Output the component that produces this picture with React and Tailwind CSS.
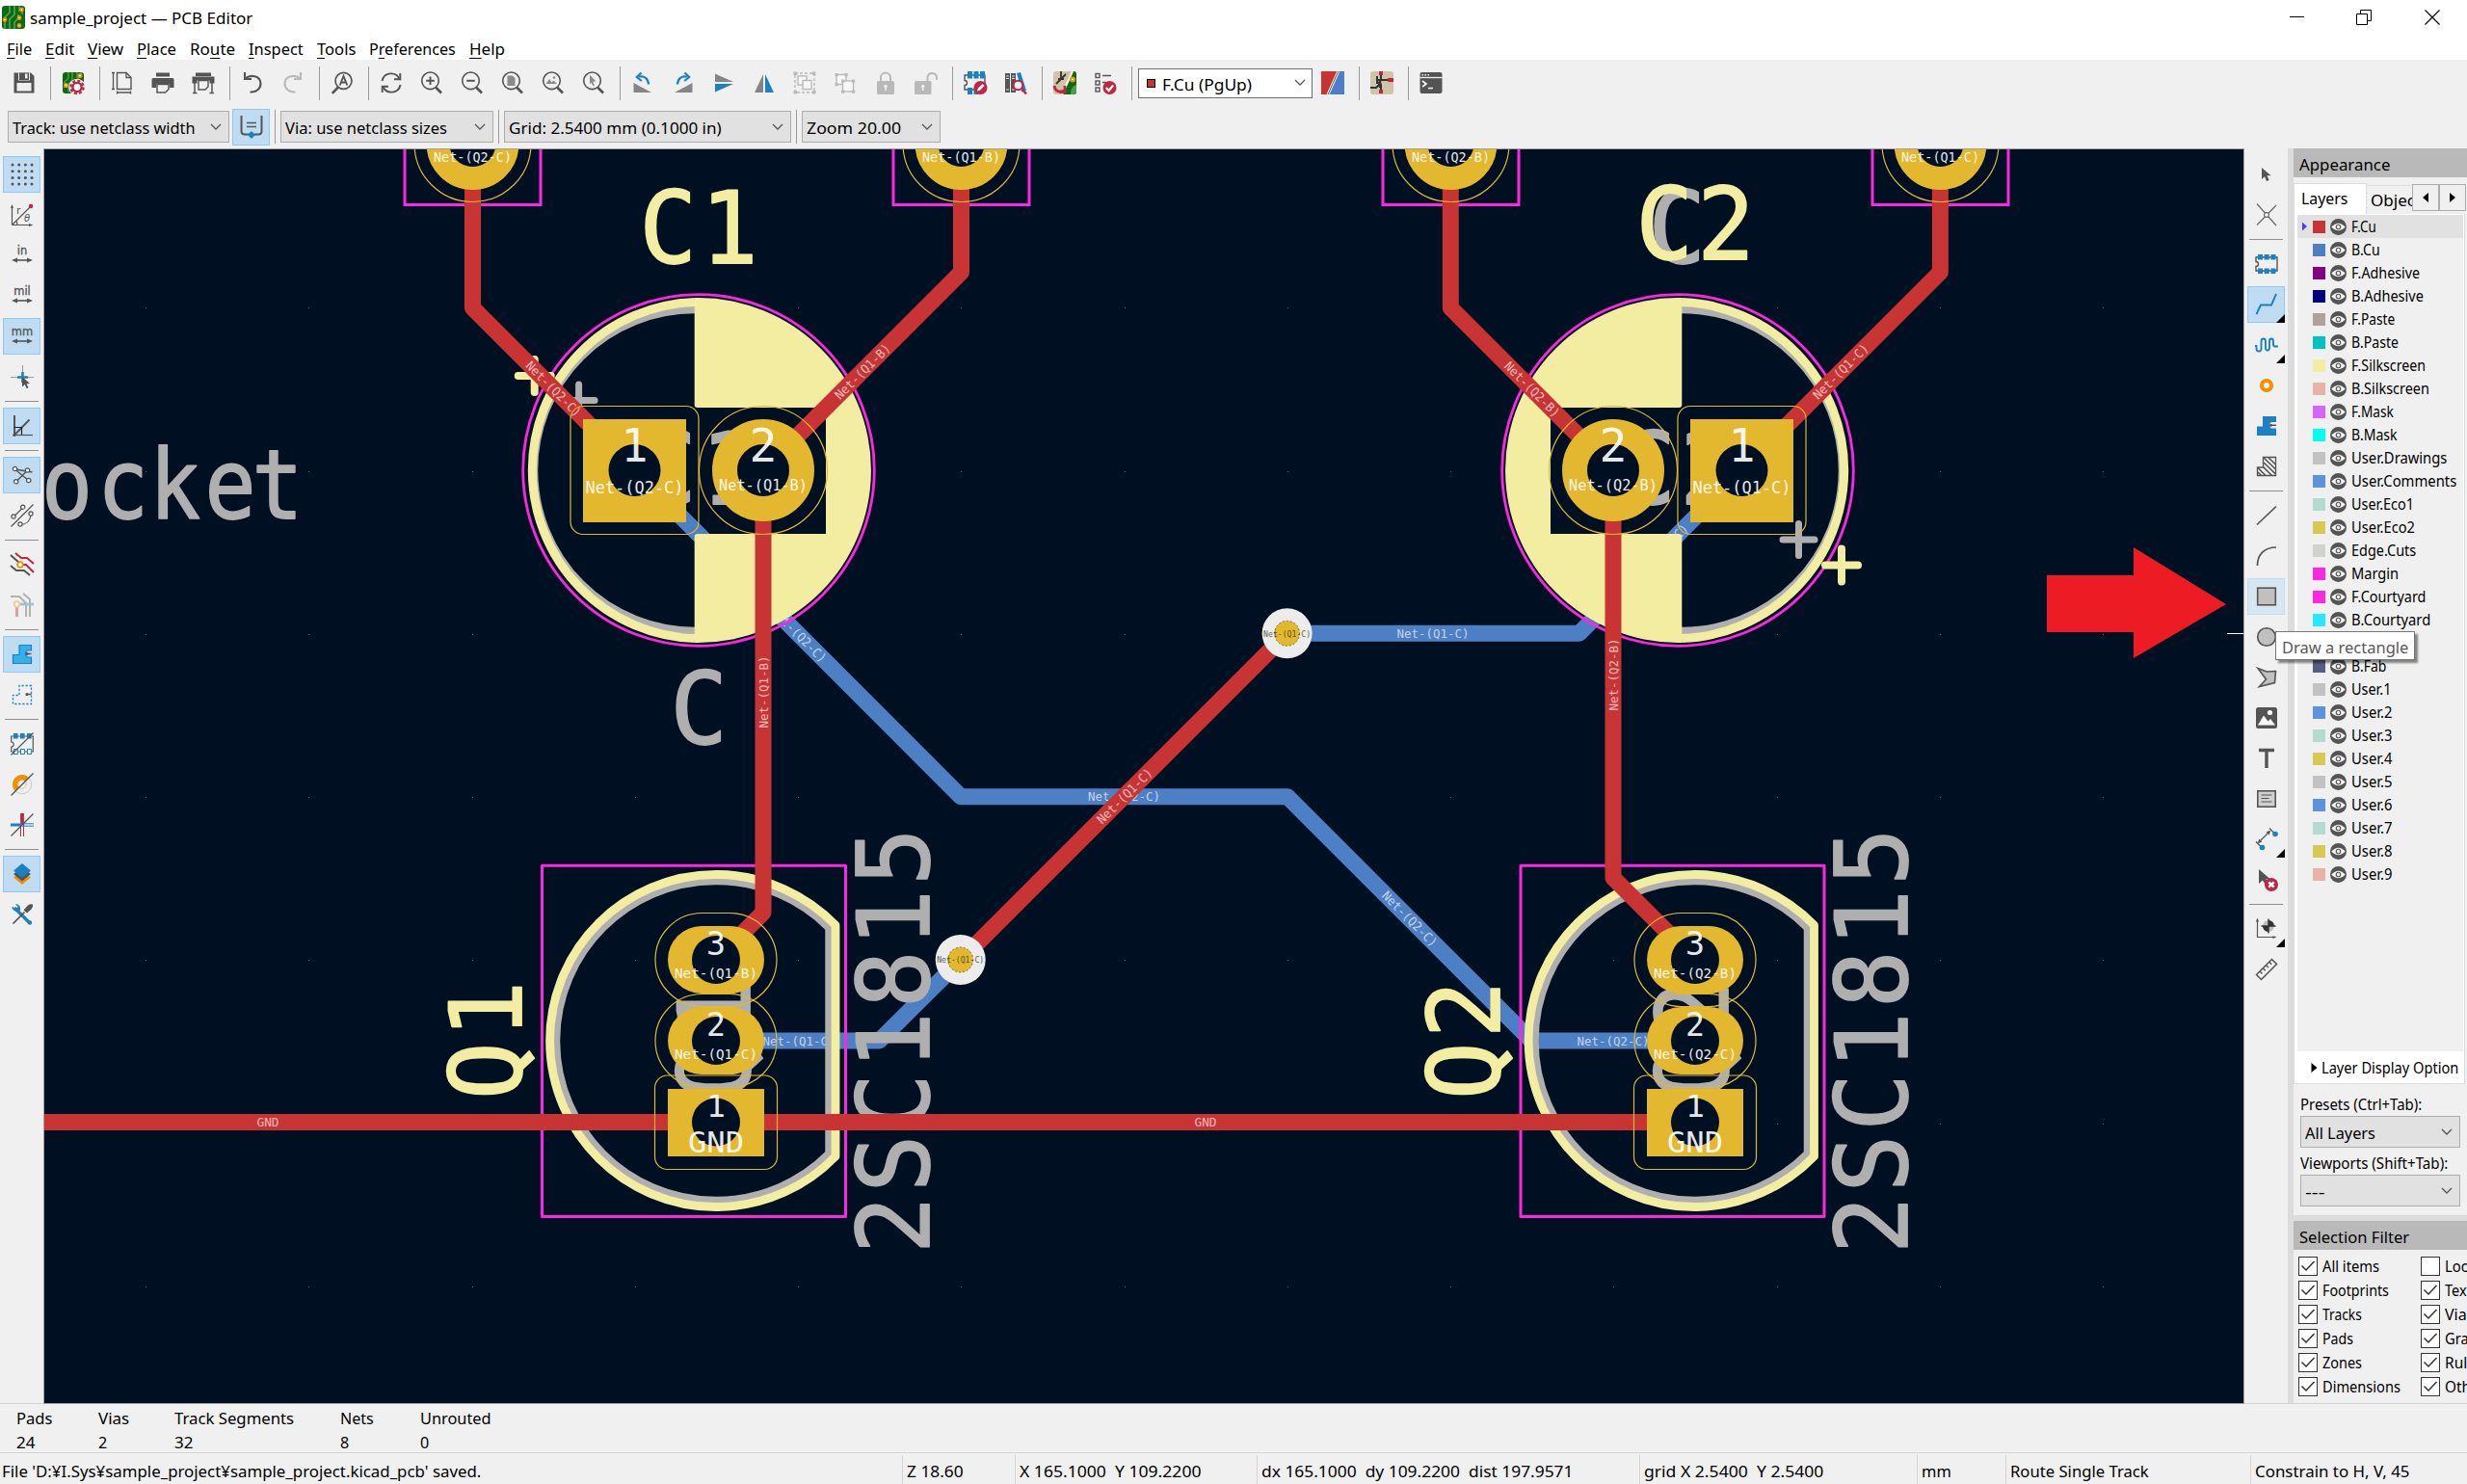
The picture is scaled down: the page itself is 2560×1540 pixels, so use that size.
import React, { useLayoutEffect, useRef, useState } from "react";

const D = "#545454";
const B = "#1a81c4";
const R = "#bf2641";
const O = "#f29100";
const G = "#b9b9b9";

/* Text squeezed or stretched horizontally to a given width. */
function Fit({ w, children, className = "" }) {
  const ref = useRef(null);
  const [k, setK] = useState(1);
  useLayoutEffect(() => {
    setK(w / ref.current.offsetWidth);
  }, [w]);
  return (
    <span className={"inline-block shrink-0 whitespace-nowrap pt-[2px] " + className} style={{ width: w }}>
      <span ref={ref} className="inline-block origin-left whitespace-nowrap" style={{ transform: `scaleX(${k})` }}>
        {children}
      </span>
    </span>
  );
}

function Svg({ children, s = 24 }) {
  return (
    <svg width={s} height={s} viewBox="0 0 24 24" fill="none" className="block shrink-0 overflow-visible">
      {children}
    </svg>
  );
}

const lens = (
  <>
    <circle cx="10.5" cy="9.8" r="8.8" stroke={D} strokeWidth="1.6" />
    <path d="M16 16.5 L22 22.5" stroke={D} strokeWidth="2.6" />
  </>
);

const boardBase = (
  <>
    <rect x="1" y="1" width="22" height="22" rx="3" fill="#0b6b12" />
    <path d="M7 1v6l-4 4v6M11 1v8l-4 4v9M16 1v5l3 4v7M20 1v5" stroke="#49a04a" strokeWidth="1.4" />
  </>
);

const footprint = (
  <>
    <path d="M1 5h22v14H1v-4.5a2.5 2.5 0 0 0 0-5z" stroke={D} strokeWidth="1.4" />
    {[3, 9.7, 16.5].map((x) => (
      <g key={x}>
        <rect x={x} y="2" width="5" height="5.5" fill={B} />
        <rect x={x} y="16.5" width="5" height="5.5" fill={B} />
      </g>
    ))}
  </>
);

const I = {
  app: (
    <>
      <rect x="0" y="0" width="24" height="24" rx="3" fill="#0b6b12" />
      <path d="M8 0v7l-5 5v12M13 0v9l-5 5v10M18 0v6M13 24v-7l4-4V9M21 4v5" stroke="#52a552" strokeWidth="1.6" />
      <g fill="#fff" stroke={O} strokeWidth="1.6">
        <circle cx="3" cy="14.5" r="1.6" />
        <circle cx="20.5" cy="4" r="1.6" />
        <circle cx="18" cy="12.5" r="1.6" />
        <circle cx="18" cy="20.5" r="1.6" />
      </g>
    </>
  ),
  save: (
    <>
      <path d="M1.5 1.5h17.5l3.5 3.5v17.5h-21z" fill={D} />
      <rect x="6" y="1.5" width="12" height="8" fill="#f0f0f0" />
      <rect x="7" y="1.5" width="10" height="7.5" fill={D} />
      <rect x="13" y="2.5" width="2.5" height="5" fill="#f0f0f0" />
      <rect x="4.5" y="12" width="15" height="8.5" fill="#f0f0f0" />
    </>
  ),
  setup: (
    <>
      {boardBase}
      <circle cx="4.5" cy="14.5" r="1.8" fill="#fff" stroke={O} strokeWidth="1.5" />
      <circle cx="19" cy="4.5" r="1.8" fill="#fff" stroke={O} strokeWidth="1.5" />
      <circle cx="16" cy="16.5" r="6.2" stroke="#f0f0f0" strokeWidth="5" />
      <circle cx="16" cy="16.5" r="6.6" stroke={R} strokeWidth="2.4" strokeDasharray="3 2.2" />
      <circle cx="16" cy="16.5" r="4.6" stroke={R} strokeWidth="2.4" fill="#fff" />
    </>
  ),
  page: (
    <>
      <path d="M6.5 1.5h9.5l5 5v12h-14.5z" stroke={D} strokeWidth="1.4" />
      <path d="M16 1.5v5h5M2.5 1v18M1 1.5h3M1 18.5h3M6 22h15M6.5 20.5v3M20.5 20.5v3" stroke={D} strokeWidth="1.3" />
    </>
  ),
  print: (
    <>
      <rect x="5" y="1.5" width="14" height="4" fill={D} />
      <path d="M2 7h20a1.5 1.5 0 0 1 1.5 1.5V17H19v-4H5v4H.5V8.5A1.5 1.5 0 0 1 2 7z" fill={D} />
      <path d="M6 13.5h12v5l-3.5 3.5H6z" stroke={D} strokeWidth="1.5" fill="#f0f0f0" />
    </>
  ),
  plot: (
    <>
      <rect x="4" y="1.5" width="16" height="3.5" fill={D} />
      <path d="M.5 5.5h23v7h-5V9.5h-13v3h-5z" fill={D} />
      <path d="M3 12v10.5M21 12v10.5M1 22.5h4.5M18.5 22.5H23" stroke={D} strokeWidth="1.5" />
      <path d="M7 9.5h10v6.5l-3 3H7z" stroke={D} strokeWidth="1.4" fill="#f0f0f0" />
    </>
  ),
  undo: <path d="M4 1v7h7M4.5 7.5C10 3 20 4.5 20.5 12.5 20.5 18 16 22 9.5 21.5" stroke={D} strokeWidth="2.1" />,
  redo: <path d="M20 1v7h-7M19.5 7.5C14 3 4 4.5 3.5 12.5 3.5 18 8 22 14.5 21.5" stroke={G} strokeWidth="2.1" />,
  find: (
    <>
      <circle cx="13.5" cy="9.8" r="8.5" stroke={D} strokeWidth="1.7" />
      <path d="M8 16.5L1.8 22.8" stroke={D} strokeWidth="2.6" />
      <path d="M9.7 14.5l3.8-9.5 3.8 9.5M11 11.5h5" stroke={D} strokeWidth="1.9" />
    </>
  ),
  refresh: (
    <>
      <path d="M2.5 10A9.5 9.5 0 0 1 20.5 8M21.5 14A9.5 9.5 0 0 1 3.5 16" stroke={D} strokeWidth="1.9" />
      <path d="M21.3 2v6.3H15M2.7 22v-6.3H9" stroke={D} strokeWidth="1.9" />
    </>
  ),
  zin: (
    <>
      {lens}
      <path d="M10.5 5.5v8.6M6.2 9.8h8.6" stroke={D} strokeWidth="2" />
    </>
  ),
  zout: (
    <>
      {lens}
      <path d="M6.2 9.8h8.6" stroke={D} strokeWidth="2" />
    </>
  ),
  zfit: (
    <>
      {lens}
      <path d="M6.5 4.5h5.5l2.5 2.5v8h-8z" fill="#8a8a8a" />
    </>
  ),
  zobj: (
    <>
      {lens}
      <path d="M4.5 13l3.5-5 2.5 3.5 2-2 3.5 3.5z" fill="#8a8a8a" />
      <circle cx="13" cy="6.5" r="1.3" fill="#8a8a8a" />
    </>
  ),
  zsel: (
    <>
      {lens}
      <path d="M8 3.8l6.5 6.7-3.3.2 1.7 3.9-1.6.7-1.7-3.9L8 13.5z" fill="#8a8a8a" />
    </>
  ),
  ccw: (
    <>
      <path d="M2.5 12l18.5 10H2.5z" fill="#858585" />
      <path d="M8 5.5c6-1 9.5 2 10 8" stroke={B} strokeWidth="2.2" />
      <path d="M10.5 1.5L5.8 6l5 4" stroke={B} strokeWidth="2.2" />
    </>
  ),
  cw: (
    <>
      <path d="M21.5 12L3 22h18.5z" fill="#858585" />
      <path d="M16 5.5c-6-1-9.5 2-10 8" stroke={B} strokeWidth="2.2" />
      <path d="M13.5 1.5L18.2 6l-5 4" stroke={B} strokeWidth="2.2" />
    </>
  ),
  flip: (
    <>
      <path d="M3 2.5v8.5h19z" fill="#858585" />
      <path d="M3 21.5V13h19z" fill={B} />
    </>
  ),
  mirror: (
    <>
      <path d="M2 22h9V3z" fill="#858585" />
      <path d="M22 22h-9V3z" fill={B} />
    </>
  ),
  group: (
    <>
      <rect x="2" y="2" width="20" height="20" stroke={G} strokeWidth="1.4" strokeDasharray="3 2" />
      <g fill={G}>
        <rect x="0.5" y="0.5" width="3.5" height="3.5" />
        <rect x="20" y="0.5" width="3.5" height="3.5" />
        <rect x="0.5" y="20" width="3.5" height="3.5" />
        <rect x="20" y="20" width="3.5" height="3.5" />
      </g>
      <g fill="#f8f8f8" stroke={G} strokeWidth="1.4">
        <rect x="5" y="5" width="9" height="9" />
        <rect x="10" y="9.5" width="9" height="9" />
      </g>
    </>
  ),
  ungroup: (
    <>
      <g fill="#f8f8f8" stroke={G} strokeWidth="1.4">
        <rect x="3" y="3.5" width="10" height="10" />
        <rect x="9.5" y="10" width="11" height="11" />
      </g>
      <g fill={G}>
        {[[1.5, 2], [11.5, 2], [1.5, 12], [8, 8.5], [19, 8.5], [8, 19.5], [19, 19.5]].map(([x, y], i) => (
          <rect key={i} x={x} y={y} width="3.2" height="3.2" />
        ))}
      </g>
    </>
  ),
  lock: (
    <>
      <path d="M7 11V6.5a5 5 0 0 1 10 0V11" stroke={G} strokeWidth="2" />
      <rect x="3" y="10" width="18" height="14" rx="1.5" fill={G} />
      <circle cx="12" cy="15.5" r="1.7" fill="#f0f0f0" />
      <rect x="11.2" y="16" width="1.6" height="4" fill="#f0f0f0" />
    </>
  ),
  unlock: (
    <>
      <path d="M13.5 11V5.5a5 5 0 0 1 9.5 0V9" stroke={G} strokeWidth="2" />
      <rect x="0" y="10" width="17.5" height="14" rx="1.5" fill={G} />
      <circle cx="8.7" cy="15.5" r="1.7" fill="#f0f0f0" />
      <rect x="7.9" y="16" width="1.6" height="4" fill="#f0f0f0" />
    </>
  ),
  fped: (
    <>
      <path d="M1 4h21v15H1v-4.5a2.5 2.5 0 0 0 0-5z" stroke={D} strokeWidth="1.4" />
      {[4, 10.5, 17].map((x) => (
        <rect key={x} x={x} y="0" width="5" height="7.5" fill={B} />
      ))}
      <rect x="4" y="17" width="5" height="7" fill={B} />
      <rect x="10.5" y="17" width="5" height="7" fill={B} />
      <circle cx="17.5" cy="17" r="7" fill={R} />
      <path d="M14 20.5l.8-2.8L19.5 13l2 2-4.7 4.7z" fill="#fff" />
    </>
  ),
  lib: (
    <>
      <rect x="1" y="2" width="5" height="20" fill={D} />
      <rect x="7" y="2" width="5" height="20" fill={D} />
      <path d="M13 2l4-1 6 19-4.5 1.5z" fill={B} />
      <path d="M2 5h3M2 7.5h3M8 5h3M8 7.5h3M2 19h3M8 19h3" stroke="#ddd" />
      <circle cx="14.5" cy="14.5" r="4.8" stroke={R} strokeWidth="2" fill="#f0f0f0" />
      <path d="M18 18l5 5.5" stroke={R} strokeWidth="2.6" />
    </>
  ),
  upd: (
    <>
      <rect x="0" y="0" width="24" height="24" rx="3" fill="#cfc3a9" />
      <path d="M20 0h1a3 3 0 0 1 3 3v18a3 3 0 0 1-3 3h-11z" fill="#0b6b12" />
      <path d="M24 14c-4 1-6 4-6 10h3a3 3 0 0 0 3-3z" fill="#49a04a" />
      <path d="M8 0v8M5 8h6M8 8l5-5M8 8L3 13" stroke="#333" strokeWidth="1.8" />
      <path d="M20 0L9 24" stroke="#fff" strokeWidth="2" />
      <circle cx="20" cy="8.5" r="2" fill="#fff" stroke={O} strokeWidth="2" />
      <path d="M1 15c1 6 5 7 10 5M12 15v6.5H6.5" stroke={R} strokeWidth="2.8" />
    </>
  ),
  drc: (
    <>
      <g stroke={D} strokeWidth="1.4">
        <rect x="2" y="2.5" width="4" height="4" />
        <rect x="2" y="10" width="4" height="4" />
        <rect x="2" y="17" width="4" height="4" />
        <path d="M9 4.5h9M9 11.5h4" />
      </g>
      <circle cx="16.5" cy="17" r="7" fill={R} />
      <path d="M12.8 17l2.8 3 4.6-5.5" stroke="#fff" strokeWidth="2.2" />
    </>
  ),
  pair: (
    <>
      <path d="M0 0h17L6 24H0z" fill="#c83434" />
      <path d="M18 0h6v24H7z" fill="#4d7fc4" />
      <path d="M17.8 0L7 24" stroke="#fff" strokeWidth="2.8" />
      <path d="M17.8 0L7 24" stroke="#444" strokeWidth=".9" />
    </>
  ),
  sch: (
    <>
      <rect x="0" y="0" width="24" height="24" rx="3" fill="#cfc3a9" />
      <path d="M11 2v7M7 5v8M7 9h13M7 11L11 14v8M0 17h6l4-4" stroke="#333" strokeWidth="2" />
      <path d="M10 8v9" stroke="#333" strokeWidth="2.6" />
      <rect x="9" y="0" width="4" height="4" fill={R} />
      <rect x="18" y="7" width="6" height="4" fill={R} />
      <rect x="9" y="19" width="4" height="4" fill={R} />
    </>
  ),
  term: (
    <>
      <rect x="0.5" y="1" width="23" height="22" rx="2" fill={D} />
      <path d="M.5 6.5h23" stroke="#f0f0f0" strokeWidth="1.3" />
      <path d="M2.5 3.8h1.5M5.5 3.8h1.5M8.5 3.8h1.5" stroke="#fff" strokeWidth="1.4" />
      <path d="M3 10l4 3-4 3M9 17.5h5" stroke="#fff" strokeWidth="1.6" />
    </>
  ),
  autow: (
    <>
      <path d="M1.5 0v16q0 3.5 3.5 3.5h14q3.500 0 3.500-3.500V0" stroke={D} strokeWidth="2" />
      <path d="M7 7.5h10M7 11.500h10" stroke={D} strokeWidth="1.400" />
      <path d="M12 16l4 4-4 4-4-4z" fill={B} />
    </>
  ),
  grid: (
    <g fill={D}>
      {[2, 8.7, 15.4, 22].map((x) => [2, 8.7, 15.4, 22].map((y) => <circle key={x + "-" + y} cx={x} cy={y} r="1.5" />))}
    </g>
  ),
  polar: (
    <>
      <path d="M1.5 22.5V2M1.5 22.5H22M1.5 22.5L21 3M7 22a7 7 0 0 0-1.5-4" stroke={D} strokeWidth="1.2" />
      <path d="M0 5l1.5-4L3 5zM19 21l4.500 1.5L19 24z" fill={D} />
      <circle cx="21" cy="3" r="2.2" fill={R} />
      <text x="6" y="11" fontSize="11" fill={D} fontFamily="DejaVu Sans">r</text>
      <text x="14" y="19" fontSize="10" fill={D} fontStyle="italic" fontFamily="DejaVu Sans">θ</text>
    </>
  ),
  cursor: (
    <>
      <path d="M12.5 0v22M0 12.5h24" stroke="#999" strokeWidth="1" />
      <path d="M12.5 7v11M7 12.5h11" stroke={B} strokeWidth="2.6" />
      <path d="M12 12l8 7-3.5.3 2 4-1.8.9-2-4.2-2.7 2.5z" fill={D} />
    </>
  ),
  angle: (
    <>
      <path d="M4 1v22" stroke={D} strokeWidth="2" />
      <path d="M2 21.5h21" stroke={D} strokeWidth="1.2" />
      <path d="M4 21.5L19.5 5.5" stroke={D} strokeWidth="1.9" />
      <path d="M4 13.5h7.5v7.5" stroke="#222" strokeWidth="1.2" />
    </>
  ),
  rats: (
    <>
      <path d="M4.5 6l18 3M4.5 6l14 11.5M5.7 19L17 7.5" stroke={D} strokeWidth="1.4" />
      <g fill="#fff" stroke={D} strokeWidth="1.2">
        <circle cx="4.5" cy="5.5" r="2.2" />
        <circle cx="17.5" cy="7" r="2.2" />
        <circle cx="5.7" cy="18.8" r="2.2" />
        <circle cx="18.7" cy="17.5" r="2.2" />
      </g>
    </>
  ),
  curved: (
    <>
      <path d="M3 13.5L12.5 4M10 21.5c7 0 10-4 11-9.5M.5 23.5L23.5.5" stroke={D} strokeWidth="1.2" />
      <g fill="#fff" stroke={D} strokeWidth="1.2">
        <circle cx="3" cy="13" r="2.1" />
        <circle cx="12.7" cy="3.2" r="2.1" />
        <circle cx="10" cy="21" r="2.1" />
        <circle cx="21" cy="10" r="2.1" />
      </g>
    </>
  ),
  netcol: (
    <>
      <path d="M0 2l10 9M0 13l6 5h8l6 5" stroke={D} strokeWidth="2" />
      <path d="M5 0l6 5h6l7 6M12 12h4l8 8" stroke={R} strokeWidth="2" />
      <circle cx="10" cy="12" r="2.8" fill="#fff" stroke={O} strokeWidth="1.8" />
    </>
  ),
  dimnet: (
    <g opacity=".4">
      <path d="M0 3h9l7 7v14M13 0l7 6v18" stroke={D} strokeWidth="2" />
      <path d="M9 11h15" stroke={B} strokeWidth="2.8" />
      <path d="M6.5 13v11" stroke={R} strokeWidth="3" />
      <circle cx="6.5" cy="11" r="2.8" fill="#fff" stroke={O} strokeWidth="1.8" />
    </g>
  ),
  zfill: (
    <>
      <path d="M2.5 21.5v-9h6.5v-10h12.5v5.5h-4a4 4 0 0 0 0 7h4v6.5z" fill="#34b0ea" stroke={B} strokeWidth="1.2" />
      <path d="M16 11.5h5.5" stroke={D} strokeWidth="1.5" />
      <circle cx="17" cy="11.5" r="1.6" fill={D} />
    </>
  ),
  zoutl: (
    <>
      <path d="M2.5 21.5v-9h6.5v-10h12.5v19z" stroke={B} strokeWidth="1.3" strokeDasharray="2.2 1.8" />
      <path d="M16 11.5h5.5" stroke={D} strokeWidth="1.5" />
      <circle cx="17" cy="11.5" r="1.6" fill={D} />
    </>
  ),
  fpout: (
    <>
      <path d="M.7 4h22.6v16H.7v-5a2.5 2.5 0 0 0 0-5z" stroke={D} strokeWidth="1.2" />
      {[3, 10, 17].map((x) => (
        <g key={x}>
          <rect x={x} y="1" width="4.6" height="5.5" fill={B} />
          <rect x={x + 0.5} y="17.5" width="3.8" height="5" fill="#fff" stroke={B} />
        </g>
      ))}
      <path d="M.5 23.5L23.5.5" stroke={D} strokeWidth="1.2" />
    </>
  ),
  padout: (
    <>
      <circle cx="12" cy="12" r="9.7" fill="#f0f0f0" stroke="#c8c8c8" strokeWidth="1" />
      <path d="M19 5A9.900 9.900 0 1 0 5 19l4-4a4.200 4.200 0 0 1 6-6z" fill={O} />
      <circle cx="12" cy="12" r="4.2" stroke="#c8c8c8" />
      <path d="M.5 23.5L23.5.5" stroke={D} strokeWidth="1.2" />
    </>
  ),
  trkout: (
    <>
      <path d="M12 0v12" stroke={R} strokeWidth="3.8" />
      <path d="M0 12h12" stroke={B} strokeWidth="3" />
      <path d="M10.5 13v11M13.5 11v13" stroke={R} strokeWidth="1" />
      <path d="M12 10.8h12M12 13.2h12" stroke={B} strokeWidth="1" />
      <path d="M.5 23.5L23.5.5" stroke={D} strokeWidth="1.2" />
    </>
  ),
  layers: (
    <>
      <path d="M3 15.5l9 7.5 9-7.5-9-7z" fill={O} />
      <path d="M3 12l9 7.5 9-7.5-9-7z" fill={D} />
      <path d="M3 8.5L12 16l9-7.5L12 1z" fill={B} />
    </>
  ),
  tools: (
    <>
      <path d="M5 6l14 14" stroke={B} strokeWidth="3.4" strokeLinecap="round" />
      <path d="M2 3.5l3 3 2.5-2.5-2.5-3a5 5 0 0 1 5 6.5A5 5 0 0 1 1.5 5z" fill={B} />
      <circle cx="20" cy="20.5" r="2.2" fill={B} />
      <path d="M14.5 9.5L2.5 21.5" stroke={D} strokeWidth="1.7" />
      <path d="M13.5 7.5L18 2.5q3-2 5-1 .5 3-1.5 5L17 10.5z" fill={D} />
    </>
  ),
  arrow: <path d="M7 5v12l3-2.7 2 4.7 2.6-1.1-2-4.6h4z" fill={D} />,
  ratsr: (
    <>
      <path d="M2 0.5L22 23M22 2L2 22.5" stroke="#6a6a6a" strokeWidth="1.2" />
      <circle cx="12" cy="12" r="2.4" fill="#fff" stroke="#6a6a6a" strokeWidth="1.2" />
    </>
  ),
  fp: footprint,
  route: <path d="M1.5 22L6 12.5h11L22 1" stroke={B} strokeWidth="1.9" />,
  meander: <path d="M0 13h1.500v3q0 2.500 2.500 2.500T6.500 16V8q0-2.500 2.200-2.500T11 8v7q0 2.500 2 2.500t2-2.500V8q0-2.500 2-2.500T19 8v3.500q0 2 2 2h3" stroke={B} strokeWidth="1.9" />,
  via: <circle cx="12" cy="12" r="5" stroke={O} strokeWidth="4.2" />,
  zone: (
    <>
      <path d="M2 22v-9.5h6V2h14v6h-5a3.8 3.8 0 0 0 0 6.5h5V22z" fill={B} />
      <path d="M16 11.3h6" stroke={D} strokeWidth="1.5" />
      <circle cx="16.5" cy="11.3" r="1.5" fill={D} />
    </>
  ),
  rule: (
    <>
      <path d="M2.5 21.5v-8.5h6V2.5h13v19z" stroke={D} strokeWidth="1.3" />
      <path d="M9 3l12.5 12M9 8l12.5 12M14 3l7.5 7M8.5 12.5l9 9M3 13.5l8 8M3 18l3.5 3.5" stroke={D} strokeWidth="1.7" />
    </>
  ),
  line: <path d="M2 21.5L22 2.5" stroke={D} strokeWidth="1.7" />,
  arc: <path d="M2.5 22C2.5 11 9 3 22 3" stroke={D} strokeWidth="1.7" />,
  rect: <rect x="2.7" y="3.2" width="18.6" height="17.6" fill="#c0c0c0" stroke={D} strokeWidth="1.6" />,
  circ: <circle cx="12" cy="12" r="9.3" fill="#c0c0c0" stroke={D} strokeWidth="1.6" />,
  poly: <path d="M3 2.5l9 3.5 9.5-.5-1 12L4.5 21.5l7-7.5z" fill="#c0c0c0" stroke={D} strokeWidth="1.6" />,
  image: (
    <>
      <rect x="1" y="1" width="22" height="22" rx="2.5" fill={D} />
      <path d="M3 19.5l6-10 4.5 6 2.5-2.5 5 6.5z" fill="#fff" />
      <circle cx="15.5" cy="6.5" r="2.6" fill="#fff" />
    </>
  ),
  T: <path d="M4 3.5h16M12 3.5V22" stroke={D} strokeWidth="3.4" />,
  tbox: (
    <>
      <rect x="2.8" y="3.8" width="18.4" height="16.4" fill="#d0d0d0" stroke={D} strokeWidth="1.6" />
      <path d="M6.5 8h11M6.5 11.5h8M6.5 15h11" stroke={D} strokeWidth="1.2" />
    </>
  ),
  dim: (
    <>
      <path d="M1 14.5l6 6M15 .5l6 6M3.5 15.5l12-12" stroke={D} strokeWidth="1.2" />
      <path d="M3 16l1.2-4.5 3.2 3.2zM16 3l-1.2 4.5-3.2-3.2z" fill={D} />
      <circle cx="7.5" cy="20.5" r="2.8" fill={B} />
      <circle cx="21" cy="6.5" r="2.8" fill={B} />
    </>
  ),
  del: (
    <>
      <path d="M4 1v15l4-3.5 3 5 3-2-2.5-4.5h4z" fill={D} />
      <circle cx="17" cy="17" r="7" fill={R} />
      <path d="M14.3 14.3l5.4 5.4M19.7 14.3l-5.4 5.4" stroke="#fff" strokeWidth="2.4" />
    </>
  ),
  origin: (
    <>
      <path d="M2.5 2v18.5H21" stroke={D} strokeWidth="1.2" />
      <path d="M1 4.5L2.5.5 4 4.5zM18.5 19l4 1.5-4 1.5z" fill={D} />
      <circle cx="14" cy="9" r="6" fill="#c0c0c0" />
      <path d="M14 3a6 6 0 0 1 6 6h-6zM14 15a6 6 0 0 1-6-6h6z" fill="#333" />
      <path d="M14 1.5v15M6.5 9h15" stroke="#333" strokeWidth="1.4" />
    </>
  ),
  ruler: (
    <>
      <path d="M1.5 17.5L17.5 1.5l5 5L6.5 22.5z" stroke={D} strokeWidth="1.5" />
      <path d="M5 14l2.5 2.5M8.2 10.8l2.5 2.5M11.5 7.5L14 10M14.8 4.2l2.5 2.5" stroke={D} strokeWidth="1.4" />
    </>
  ),
};

function UnitIcon({ t }) {
  return (
    <Svg>
      <text x="12" y="10.5" textAnchor="middle" fontSize="11.5" fill={D} stroke={D} strokeWidth=".3" fontFamily="DejaVu Sans">{t}</text>
      <path d="M5 17h14" stroke={D} strokeWidth="1.6" />
      <path d="M1 17l6-2.6v5.2zM23 17l-6-2.6v5.2z" fill={D} />
    </Svg>
  );
}
const unit = { in: "in", mil: "mil", mm: "mm" };

function TopRow() {
  const items = ["save", "|", "setup", "|", "page", "print", "plot", "|", "undo", "redo", "|", "find", "|", "refresh", "zin", "zout", "zfit", "zobj", "zsel", "|", "ccw", "cw", "flip", "mirror", "group", "ungroup", "lock", "unlock", "|", "fped", "lib", "|", "upd", "drc", "|", "combo", "pair", "|", "sch", "|", "term"];
  return (
    <div className="flex h-[46px] shrink-0 items-center pl-1 pt-0.5">
      {items.map((k, i) => {
        if (k === "|") return <div key={i} className="mr-[2px] ml-[6px] h-[35px] w-px bg-[#9a9a9a]" />;
        if (k === "combo")
          return (
            <div key={i} className="ml-1 flex h-[31px] w-[181px] items-center border border-[#6f6f6f] bg-white pl-2">
              <div className="mr-[7px] h-[9px] w-[9px] border border-black bg-[#c83434]" />
              <Fit w={93}>F.Cu (PgUp)</Fit>
              <Chevron className="mr-[5px] ml-auto" />
            </div>
          );
        return (
          <div key={i} className="flex w-[42px] shrink-0 justify-center">
            <Svg>{I[k]}</Svg>
          </div>
        );
      })}
    </div>
  );
}

function Chevron({ className }) {
  return (
    <svg width="14" height="14" viewBox="0 0 14 14" fill="none" className={"block shrink-0 " + className}>
      <path d="M2 4L7 9l5-5" stroke="#555" strokeWidth="1.3" />
    </svg>
  );
}

function Combo({ w, tw, children }) {
  return (
    <div className="flex h-[33px] shrink-0 items-center border border-[#adadad] bg-[#e1e1e1] pl-1 text-[17px]" style={{ width: w }}>
      <Fit w={tw}>{children}</Fit>
      <Chevron className="mr-[6px] ml-auto" />
    </div>
  );
}

function SideBar({ items, active, hover, menus = [] }) {
  return (
    <div className="flex w-[45px] shrink-0 flex-col items-center bg-[#f0f0f0] pt-[6px]">
      {items.map((k, i) => {
        if (k === "|") return <div key={i} className="my-1 h-px w-[35px] shrink-0 bg-[#8f8f8f]" />;
        const on = active.includes(k);
        const st = on ? "bg-[#c0dcf3] border-[#90c8f6]" : hover === k ? "bg-[#d8e6f1] border-[#bddcf5]" : "border-transparent";
        return (
          <div key={i} className={"relative my-0.5 flex h-[38px] w-[39px] shrink-0 items-center justify-center border " + st}>
            {unit[k] ? <UnitIcon t={k} /> : <Svg>{I[k]}</Svg>}
            {menus.includes(k) && (
              <svg width="9" height="9" className="absolute -right-px -bottom-px">
                <path d="M9 0v9H0z" fill="#000" />
              </svg>
            )}
          </div>
        );
      })}
    </div>
  );
}

/* ---------- board canvas ---------- */

const RED = "#c83434", BLU = "#4d7fc4", GOLD = "#e3b72e", SILK = "#f2eda1", GRY = "#afafaf", MAG = "#ff26e2", BG = "#001023";
const MONO = "'DejaVu Sans Mono', monospace";

/* Silkscreen lettering: fixed pitch, glyphs slightly condensed inside their cells. */
function Big({ x, y, rot = 0, fill, children, k = 0.95, size = 104, cells }) {
  const pitch = 63.7;
  const xs = cells || children.split("").map((_, i) => i * pitch + (pitch * (1 - k)) / 2);
  return (
    <text
      transform={`translate(${x} ${y}) rotate(${rot}) scale(${k} 1)`}
      x={xs.map((v) => v / k).join(" ")}
      y="0"
      fontSize={size}
      fill={fill}
      stroke={fill}
      strokeWidth="1.8"
      strokeLinejoin="round"
      fontFamily={MONO}
    >
      {children}
    </text>
  );
}

function Net({ x, y, rot = 0, fill = "#fff", op = 0.65, len = 75, size = 13, children }) {
  return (
    <text transform={`translate(${x} ${y}) rotate(${rot})`} x={-len / 2} y={size * 0.36} fontSize={size} fill={fill} opacity={op} textLength={len} lengthAdjust="spacingAndGlyphs" fontFamily={MONO}>
      {children}
    </text>
  );
}

function PadText({ x, y, size, len, children }) {
  return (
    <text x={x - len / 2} y={y} fontSize={size} fill="#fff" opacity=".9" textLength={len} lengthAdjust="spacingAndGlyphs" fontFamily={MONO}>
      {children}
    </text>
  );
}

function TopPad({ x, net }) {
  return (
    <g>
      <circle cx={x} cy="149" r="36" stroke={GOLD} strokeWidth="24" fill={BG} />
      <circle cx={x} cy="149" r="60.5" stroke={GOLD} fill="none" strokeWidth="1.2" />
      <PadText x={x} y={168} size={14} len={81}>{net}</PadText>
    </g>
  );
}

function CapPads({ x1, x2, n1, n2 }) {
  return (
    <g>
      <rect x={x1 - 53.5} y="435" width="107" height="107" fill={GOLD} />
      <circle cx={x1} cy="488" r="27" fill={BG} />
      <rect x={x1 - 66.5} y="421.5" width="133" height="133" rx="13" fill="none" stroke={GOLD} strokeWidth="1.2" />
      <circle cx={x2} cy="488" r="40" fill={BG} stroke={GOLD} strokeWidth="26" />
      <circle cx={x2} cy="488" r="66.5" fill="none" stroke={GOLD} strokeWidth="1.2" />
      <PadText x={x1} y={478.5} size={48} len={28}>1</PadText>
      <PadText x={x2} y={478.5} size={48} len={29}>2</PadText>
      <PadText x={x1} y={511.5} size={17} len={102}>{n1}</PadText>
      <PadText x={x2} y={508.5} size={16} len={92}>{n2}</PadText>
    </g>
  );
}

function TransPads({ x, n3, n2 }) {
  return (
    <g>
      {[[996, "3", n3], [1080, "2", n2]].map(([y, num, net]) => (
        <g key={num}>
          <rect x={x - 50} y={y - 35} width="100" height="70" rx="35" fill={GOLD} />
          <circle cx={x} cy={y} r="25" fill={BG} />
          <rect x={x - 63} y={y - 48.5} width="126" height="97" rx="48.5" fill="none" stroke={GOLD} strokeWidth="1.2" />
          <PadText x={x} y={y - 5.5} size={33} len={20}>{num}</PadText>
          <PadText x={x} y={y + 19} size={14.5} len={86}>{net}</PadText>
        </g>
      ))}
      <rect x={x - 50} y="1130" width="100" height="70" fill={GOLD} />
      <circle cx={x} cy="1164.5" r="25" fill={BG} />
      <rect x={x - 63.5} y="1116" width="127" height="97.5" rx="13" fill="none" stroke={GOLD} strokeWidth="1.2" />
      <PadText x={x} y={1159} size={32} len={20}>1</PadText>
      <PadText x={x} y={1195.5} size={31} len={58}>GND</PadText>
    </g>
  );
}

function CapSilk({ mirror }) {
  return (
    <g transform={mirror ? "translate(2466 0) scale(-1 1)" : undefined}>
      <circle cx="725" cy="488" r="182.3" stroke={MAG} strokeWidth="2.8" fill="none" />
      <path d="M721 321.5A166.5 166.5 0 0 0 721 654.5" stroke={GRY} strokeWidth="7.5" fill="none" />
      <path d="M721 313.5A174.6 174.6 0 0 0 721 662.5" stroke={SILK} strokeWidth="9" fill="none" />
      <path d="M720.7 309H725A179 179 0 0 1 725 667H720.7V557a3 3 0 0 1 3-3H857V423H723.7a3 3 0 0 1-3-3z" fill={SILK} />
    </g>
  );
}

function TransBody({ x }) {
  return (
    <g fill="none" strokeLinejoin="round">
      <rect x={x - 180.5} y="898.3" width="315" height="364.2" stroke={MAG} strokeWidth="3" />
      <path d={`M${x + 117} 963A165.5 165.5 0 1 0 ${x + 117} 1197Z`} stroke={GRY} strokeWidth="7.5" />
      <path d={`M${x + 124} 960A172.5 172.5 0 1 0 ${x + 124} 1200Z`} stroke={SILK} strokeWidth="8.8" />
    </g>
  );
}

function Plus({ x, y, c, r = 16.5, w = 7 }) {
  return <path d={`M${x - r} ${y}h${2 * r}M${x} ${y - r}v${2 * r}`} stroke={c} strokeWidth={w} strokeLinecap="round" />;
}

function Via({ x, y }) {
  return (
    <g>
      <circle cx={x} cy={y} r="26" fill="#ececec" />
      <circle cx={x} cy={y} r="13" fill={GOLD} stroke="#6b5a20" strokeWidth=".8" strokeDasharray="2 2" />
      <Net x={x} y={y} fill="#222" op={0.7} len={49} size={9}>Net-(Q1-C)</Net>
    </g>
  );
}

function Board() {
  const dots = [];
  for (let i = 0; i < 14; i++) for (let j = 0; j < 7; j++) dots.push([151 + 169.25 * i, 319.3 + 169.25 * j]);
  return (
    <svg width="2282" height="1301" viewBox="46 155 2282 1301" fill="none" className="block">
      <rect x="46" y="155" width="2282" height="1301" fill={BG} />
      {dots.map(([x, y], i) => (
        <rect key={i} x={Math.round(x)} y={Math.round(y)} width="1" height="1" fill="#5f6b7a" />
      ))}
      <g stroke={BLU} strokeWidth="17" strokeLinecap="round" strokeLinejoin="round">
        <path d="M658.5 488L997 826.7H1336L1589.3 1080H1759" />
        <path d="M743 1080H912.5L997 996" />
        <path d="M1335.6 657.3H1638.7L1807.7 488" />
      </g>
      <Net x={829} y={658.5} rot={45}>Net-(Q2-C)</Net>
      <Net x={1166.5} y={826.7}>Net-(Q2-C)</Net>
      <Net x={1463} y={953.5} rot={45}>Net-(Q2-C)</Net>
      <Net x={1487} y={657.3}>Net-(Q1-C)</Net>
      <Net x={1723} y={572.5} rot={-45}>Net-(Q1-C)</Net>
      <Net x={829} y={1080}>Net-(Q1-C)</Net>
      <Net x={1674} y={1080}>Net-(Q2-C)</Net>

      <Big x={0} y={538} fill={GRY} k={0.88} size={100} cells={[43, 101, 155, 212.5, 261.5]}>ocket</Big>
      <Big x={694} y={772} fill={GRY}>C</Big>
      <Big x={662} y={523} fill={GRY}>C1</Big>
      <Big x={1709} y={273} fill={GRY}>C</Big>
      <Big x={1678} y={523} fill={GRY}>C2</Big>
      <Big x={964} y={1302.5} rot={-90} fill={GRY}>2SC1815</Big>
      <Big x={1979} y={1302.5} rot={-90} fill={GRY}>2SC1815</Big>
      <Big x={778} y={1142.5} rot={-90} fill={GRY}>Q1</Big>
      <Big x={1793} y={1142.5} rot={-90} fill={GRY}>Q2</Big>
      <Plus x={600.6} y={415.5} c={GRY} />
      <Plus x={1866.5} y={560} c={GRY} />

      {[490.5, 997.5, 1505.5, 2013.5].map((x) => (
        <rect key={x} x={x - 70.5} y="100" width="141" height="112.5" stroke={MAG} strokeWidth="3" />
      ))}
      <CapSilk />
      <CapSilk mirror />
      <TransBody x={743} />
      <TransBody x={1758.5} />
      <Big x={662} y={273} fill={SILK}>C1</Big>
      <Big x={1696} y={269} fill={SILK}>C2</Big>
      <Big x={541} y={1142.5} rot={-90} fill={SILK}>Q1</Big>
      <Big x={1556} y={1142.5} rot={-90} fill={SILK}>Q2</Big>
      <Plus x={554.7} y={390} c={SILK} r={17} w={8} />
      <Plus x={1911} y={586.5} c={SILK} r={17} w={8} />

      <g stroke={RED} strokeWidth="17" strokeLinecap="round" strokeLinejoin="round">
        <path d="M490.5 149V319.5L659 488" />
        <path d="M997.5 149V282.5L792 488V947L743 996" />
        <path d="M1505.3 149V319.5L1674 488V911L1759 996" />
        <path d="M2013.4 149V282.5L1807.7 488" />
        <path d="M997 996L1335.6 657.3" />
        <path d="M40 1164.5H1759" />
      </g>
      <Net x={574.5} y={403.5} rot={45}>Net-(Q2-C)</Net>
      <Net x={895} y={385.5} rot={-45}>Net-(Q1-B)</Net>
      <Net x={1590} y={404} rot={45}>Net-(Q2-B)</Net>
      <Net x={1910} y={385.5} rot={-45}>Net-(Q1-C)</Net>
      <Net x={792} y={718} rot={-90}>Net-(Q1-B)</Net>
      <Net x={1674} y={700} rot={-90}>Net-(Q2-B)</Net>
      <Net x={1167} y={826} rot={-45}>Net-(Q1-C)</Net>
      <Net x={278} y={1164.5} len={23}>GND</Net>
      <Net x={1251} y={1164.5} len={23}>GND</Net>

      <TopPad x={490.5} net="Net-(Q2-C)" />
      <TopPad x={997.5} net="Net-(Q1-B)" />
      <TopPad x={1505.5} net="Net-(Q2-B)" />
      <TopPad x={2013.5} net="Net-(Q1-C)" />
      <CapPads x1={658.5} x2={792} n1="Net-(Q2-C)" n2="Net-(Q1-B)" />
      <CapPads x1={1807.5} x2={1674} n1="Net-(Q1-C)" n2="Net-(Q2-B)" />
      <TransPads x={743} n3="Net-(Q1-B)" n2="Net-(Q1-C)" />
      <TransPads x={1759} n3="Net-(Q2-B)" n2="Net-(Q2-C)" />
      <Via x={996.7} y={996} />
      <Via x={1335.6} y={657.3} />

      <path d="M2124 597H2214V568L2310 627 2214 683V656H2124z" fill="#ed1c24" />
      <path d="M2311 657.5H2328" stroke="#fff" />
    </svg>
  );
}

/* ---------- right panel ---------- */

const LAYERS = [
  ["F.Cu", "#c83434", 26], ["B.Cu", "#4d7fc4", 30], ["F.Adhesive", "#840084", 71], ["B.Adhesive", "#000084", 75],
  ["F.Paste", "#b4a09a", 45], ["B.Paste", "#00c2c2", 49], ["F.Silkscreen", "#f2eda1", 77], ["B.Silkscreen", "#e8b2a7", 81],
  ["F.Mask", "#d864ff", 44], ["B.Mask", "#02ffee", 48], ["User.Drawings", "#c2c2c2", 99], ["User.Comments", "#5994dc", 109],
  ["User.Eco1", "#b4dbd2", 65], ["User.Eco2", "#d8c852", 66], ["Edge.Cuts", "#d0d2cd", 67], ["Margin", "#ff26e2", 49],
  ["F.Courtyard", "#ff26e2", 77], ["B.Courtyard", "#26e9ff", 82], ["F.Fab", "#afafaf", 32], ["B.Fab", "#585d84", 36],
  ["User.1", "#c2c2c2", 41], ["User.2", "#5994dc", 42], ["User.3", "#b4dbd2", 42], ["User.4", "#d8c852", 42],
  ["User.5", "#c2c2c2", 42], ["User.6", "#5994dc", 42], ["User.7", "#b4dbd2", 42], ["User.8", "#d8c852", 42], ["User.9", "#e8b2a7", 42],
];

function Eye() {
  return (
    <svg width="17" height="17" viewBox="0 0 16 16" fill="none" className="mr-[5px] ml-[5px] block shrink-0">
      <circle cx="8" cy="8" r="8" fill="#545454" />
      <path d="M1.2 8Q8 .8 14.8 8 8 15.2 1.2 8z" fill="#f4f4f4" />
      <circle cx="8" cy="8" r="2.1" stroke="#545454" strokeWidth="1.1" />
    </svg>
  );
}

function Check({ on, w, children }) {
  return (
    <div className="flex h-[25px] items-center pt-px">
      <div className="mr-[5px] flex h-5 w-5 shrink-0 items-center justify-center border border-[#333] bg-white">
        {on && (
          <svg width="16" height="14" viewBox="0 0 16 14" fill="none">
            <path d="M1.5 6.5l4.5 4.5L14.5 2" stroke="#333" strokeWidth="1.5" />
          </svg>
        )}
      </div>
      <Fit w={w}>{children}</Fit>
    </div>
  );
}

function RightPanel() {
  return (
    <div className="flex w-[180px] shrink-0 flex-col overflow-hidden bg-[#f0f0f0] text-[15.5px]">
      <div className="flex h-[30px] shrink-0 items-center bg-[#b9b9b9] pl-[6px] text-[17px]"><Fit w={94}>Appearance</Fit></div>
      <div className="mt-[6px] flex h-[32px] shrink-0 items-start">
        <div className="flex h-full w-[76px] items-center border border-b-0 border-[#dcdcdc] bg-white pl-[7px] pb-[2px] text-[16.5px]"><Fit w={48}>Layers</Fit></div>
        <div className="mt-[2px] flex h-[30px] w-[47px] items-center overflow-hidden border-t border-[#dcdcdc] pl-1 text-[16.5px]"><Fit w={60}>Objects</Fit></div>
        <div className="mt-[1px] flex h-[28px] w-[28px] items-center justify-center border border-[#adadad]"><svg width="6" height="10"><path d="M6 0v10L0 5z" /></svg></div>
        <div className="mt-[1px] flex h-[28px] w-[28px] items-center justify-center border border-[#adadad]"><svg width="6" height="10"><path d="M0 0v10l6-5z" /></svg></div>
      </div>
      <div className="h-[903px] w-[178px] shrink-0 border border-t-0 border-[#dcdcdc] bg-white pt-[1px] pr-[1px] pl-[3px]">
        <div className="h-[868px] bg-[#f0f0f0]">
          {LAYERS.map(([n, c, w], i) => (
            <div key={n} className={"flex h-6 items-center " + (i === 0 ? "bg-[#e1e1e1]" : "")}>
              <svg width="16" height="10" className="block shrink-0">{i === 0 && <path d="M5 0.5l5 4.500-5 4.500z" fill="#4040ff" />}</svg>
              <div className="h-[13px] w-[13px] shrink-0" style={{ backgroundColor: c }} />
              <Eye />
              <Fit w={w}>{n}</Fit>
            </div>
          ))}
        </div>
        <div className="flex h-[33px] w-[167px] items-center overflow-hidden pl-[14px]">
          <svg width="7" height="10" className="mr-1 shrink-0"><path d="M0.5 0v10l6-5z" /></svg>
          <Fit w={149}>Layer Display Options</Fit>
        </div>
      </div>
      <div className="mt-[9px] shrink-0 pl-[7px]">
        <div className="flex h-[24px] items-center"><Fit w={126}>Presets (Ctrl+Tab):</Fit></div>
        <Combo w={166} tw={73}>All Layers</Combo>
        <div className="mt-[4px] flex h-[24px] items-center"><Fit w={153}>Viewports (Shift+Tab):</Fit></div>
        <Combo w={166} tw={20}>---</Combo>
      </div>
      <div className="mt-[9px] h-[6px] shrink-0 bg-[#dcdcdc]" />
      <div className="flex h-[30px] shrink-0 items-center bg-[#b9b9b9] pl-[6px] text-[17px]"><Fit w={114}>Selection Filter</Fit></div>
      <div className="mt-[4px] flex shrink-0 pl-[5px]">
        <div className="w-[127px] shrink-0">
          <Check on w={59}>All items</Check>
          <Check on w={69}>Footprints</Check>
          <Check on w={41}>Tracks</Check>
          <Check on w={32}>Pads</Check>
          <Check on w={41}>Zones</Check>
          <Check on w={81}>Dimensions</Check>
        </div>
        <div className="w-[127px] shrink-0">
          <Check w={92}>Locked items</Check>
          <Check on w={28}>Text</Check>
          <Check on w={30}>Vias</Check>
          <Check on w={61}>Graphics</Check>
          <Check on w={77}>Rule Areas</Check>
          <Check on w={86}>Other items</Check>
        </div>
      </div>
    </div>
  );
}

const MENU = [["", "F", "ile", 26], ["", "E", "dit", 30], ["", "V", "iew", 37], ["", "P", "lace", 41], ["Ro", "u", "te", 47], ["", "I", "nspect", 57], ["", "T", "ools", 40], ["P", "r", "eferences", 90], ["", "H", "elp", 37]];

const STATS = [["Pads", "24", 37, "w-[85px]"], ["Vias", "2", 32, "w-[79px]"], ["Track Segments", "32", 124, "w-[172px]"], ["Nets", "8", 35, "w-[83px]"], ["Unrouted", "0", 74, "w-[90px]"]];

const STATUS = [
  ["File 'D:¥I.Sys¥sample_project¥sample_project.kicad_pcb' saved.", 497, "w-[936px] pl-[2px]"],
  ["Z 18.60", 59, "w-[117px] pl-1 border-l"],
  ["X 165.1000  Y 109.2200", 189, "w-[251px] pl-1 border-l"],
  ["dx 165.1000  dy 109.2200  dist 197.9571", 324, "w-[397px] pl-1 border-l"],
  ["grid X 2.5400  Y 2.5400", 186, "w-[288px] pl-1 border-l"],
  ["mm", 31, "w-[92px] pl-1 border-l"],
  ["Route Single Track", 144, "w-[254px] pl-1 border-l"],
  ["Constrain to H, V, 45", 161, "w-[224px] pl-1 border-l"],
];

export default function App() {
  return (
    <div className="relative flex h-[1540px] w-[2560px] flex-col overflow-hidden bg-[#f0f0f0] font-['Noto_Sans','Open_Sans',sans-serif] text-[17px] leading-none text-black">
      <div className="flex h-[35px] shrink-0 items-center bg-white pl-[2px]">
        <Svg>{I.app}</Svg>
        <Fit w={231} className="ml-[5px]">sample_project — PCB Editor</Fit>
        <svg width="15" height="15" className="ml-auto"><path d="M0 7.5h15" stroke="#000" /></svg>
        <svg width="16" height="16" fill="none" className="ml-[54px]"><path d="M.5 4.5h11v11H.5zM4.5 4V.5h11v11H12" stroke="#000" /></svg>
        <svg width="16" height="16" className="mr-[28px] ml-[55px]"><path d="M.5.5l15 15M15.5.5l-15 15" stroke="#000" strokeWidth="1.2" /></svg>
      </div>
      <div className="flex h-[27px] shrink-0 items-center gap-[14px] bg-white pt-px pl-[7px]">
        {MENU.map(([a, b, c, w]) => (
          <Fit key={b + c} w={w}>{a}<span className="underline decoration-1 underline-offset-[3px]">{b}</span>{c}</Fit>
        ))}
      </div>
      <TopRow />
      <div className="flex h-[46px] shrink-0 items-center pt-px pl-2">
        <Combo w={230} tw={190}>Track: use netclass width</Combo>
        <div className="ml-[3px] flex h-[38px] w-[39px] items-center justify-center border border-[#90c8f6] bg-[#c0dcf3]"><Svg>{I.autow}</Svg></div>
        <div className="mx-[5px] h-[35px] w-px bg-[#9a9a9a]" />
        <Combo w={221} tw={168}>Via: use netclass sizes</Combo>
        <div className="mr-[5px] ml-[5px] h-[35px] w-px bg-[#9a9a9a]" />
        <Combo w={298} tw={221}>Grid: 2.5400 mm (0.1000 in)</Combo>
        <div className="mx-[5px] h-[35px] w-px bg-[#9a9a9a]" />
        <Combo w={144} tw={98}>Zoom 20.00</Combo>
      </div>
      <div className="flex h-[1303px] shrink-0 border-b border-[#d4d4d4]">
        <SideBar
          items={["grid", "polar", "in", "mil", "mm", "cursor", "|", "angle", "|", "rats", "curved", "|", "netcol", "dimnet", "|", "zfill", "zoutl", "|", "fpout", "padout", "trkout", "|", "layers", "tools"]}
          active={["grid", "mm", "angle", "rats", "zfill", "layers"]}
        />
        <div className="h-[1303px] w-[2284px] shrink-0 overflow-hidden border border-[#a0a0a0]">
          <Board />
        </div>
        <SideBar
          items={["arrow", "ratsr", "|", "fp", "route", "meander", "via", "zone", "rule", "|", "line", "arc", "rect", "circ", "poly", "image", "T", "tbox", "dim", "del", "|", "origin", "ruler"]}
          active={["route"]}
          hover="rect"
          menus={["route", "meander", "dim", "origin"]}
        />
        <div className="w-[6px] shrink-0 bg-[#dcdcdc]" />
        <RightPanel />
      </div>
      <div className="flex h-[51px] shrink-0 border-b border-[#d4d4d4] pl-[17px]">
        {STATS.map(([a, b, w, cls]) => (
          <div key={a} className={"pt-[1px] " + cls}>
            <div className="flex h-[25px] items-center"><Fit w={w}>{a}</Fit></div>
            <div className="flex h-[25px] items-center"><Fit w={b.length * 9.5}>{b}</Fit></div>
          </div>
        ))}
      </div>
      <div className="flex h-[32px] shrink-0 pt-[2px]">
        {STATUS.map(([t, w, cls]) => (
          <div key={t} className={"flex h-[30px] items-center border-[#d4d4d4] whitespace-pre " + cls}>
            <Fit w={w}><span className="whitespace-pre">{t}</span></Fit>
          </div>
        ))}
      </div>
      <div className="absolute top-[655px] left-[2361px] flex h-[30px] w-[145px] items-center border border-[#767676] bg-white pl-[6px] text-[17px] text-[#575757] shadow-[3px_3px_2px_rgba(0,0,0,0.45)]">
        <Fit w={131}>Draw a rectangle</Fit>
      </div>
    </div>
  );
}
